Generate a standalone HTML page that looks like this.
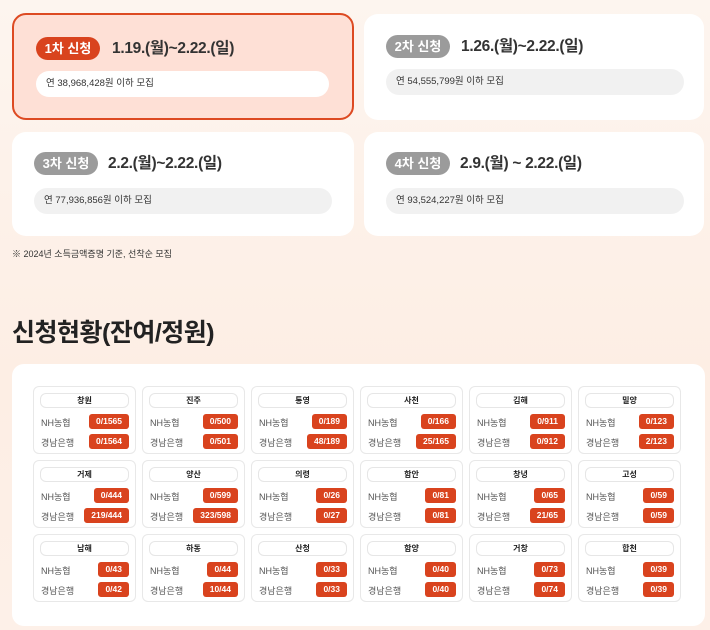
<!DOCTYPE html>
<html><head><meta charset="utf-8"><style>
*{margin:0;padding:0;box-sizing:border-box}
body{width:710px;height:630px;overflow:hidden;background:linear-gradient(180deg,#fdf5ef 0%,#fdeee4 60%,#fdf0e8 100%);font-family:"Liberation Sans","Noto Sans CJK KR",sans-serif;position:relative;color:#222}
.card{position:absolute;background:#fff;border-radius:14px}
.card.on{background:#fee0d6;border:2px solid #dd4a22}
.badge{position:absolute;height:23px;border-radius:12px;color:#fff;font-weight:bold;font-size:13px;line-height:23px;text-align:center;background:#9b9b9b}
.on .badge{background:#d9431e}
.date{position:absolute;font-size:15.5px;font-weight:bold;color:#333;line-height:23px;letter-spacing:-0.3px}
.pill{position:absolute;height:26px;border-radius:13px;background:#f1f1f1;font-size:9.5px;line-height:26px;padding-left:10px;color:#333}
.on .pill{background:#fff}
.note{position:absolute;left:12px;top:247px;font-size:9px;color:#333}
h2{position:absolute;left:12px;top:313px;font-size:25px;font-weight:bold;color:#222;letter-spacing:-0.5px}
.panel{position:absolute;left:12px;top:364px;width:693px;height:262px;background:#fff;border-radius:12px}
.cell{position:absolute;width:103px;height:68px;border:1px solid #e8e8e8;border-radius:6px;background:#fff}
.nm{position:absolute;left:6px;top:6px;width:89px;height:15px;border:1px solid #e6e6e6;border-radius:6px;font-size:8px;font-weight:bold;text-align:center;line-height:13px;color:#222}
.lb{position:absolute;left:7px;font-size:9px;color:#555}
.v{position:absolute;right:6px;height:15px;padding:0 7px;background:#d9431e;color:#fff;font-size:8.5px;font-weight:bold;line-height:15px;border-radius:3px;min-width:28px;text-align:center}
</style></head><body>
<div class="card on" style="left:12px;top:13px;width:342px;height:107px">
 <div class="badge" style="left:22px;top:22px;width:64px">1차 신청</div>
 <div class="date" style="left:98px;top:22px">1.19.(월)~2.22.(일)</div>
 <div class="pill" style="left:22px;top:56px;width:293px">연 38,968,428원 이하 모집</div>
</div>
<div class="card" style="left:364px;top:14px;width:340px;height:106px">
 <div class="badge" style="left:22px;top:21px;width:64px">2차 신청</div>
 <div class="date" style="left:97px;top:21px">1.26.(월)~2.22.(일)</div>
 <div class="pill" style="left:22px;top:55px;width:298px">연 54,555,799원 이하 모집</div>
</div>
<div class="card" style="left:12px;top:132px;width:342px;height:104px">
 <div class="badge" style="left:22px;top:20px;width:64px">3차 신청</div>
 <div class="date" style="left:96px;top:20px">2.2.(월)~2.22.(일)</div>
 <div class="pill" style="left:22px;top:56px;width:298px">연 77,936,856원 이하 모집</div>
</div>
<div class="card" style="left:364px;top:132px;width:340px;height:104px">
 <div class="badge" style="left:22px;top:20px;width:64px">4차 신청</div>
 <div class="date" style="left:96px;top:20px">2.9.(월) ~ 2.22.(일)</div>
 <div class="pill" style="left:22px;top:56px;width:298px">연 93,524,227원 이하 모집</div>
</div>
<div class="note">※ 2024년 소득금액증명 기준, 선착순 모집</div>
<h2>신청현황(잔여/정원)</h2>
<div class="panel"></div>
<div id="g"></div>
<script>
var d=[["창원","0/1565","0/1564"],["진주","0/500","0/501"],["통영","0/189","48/189"],["사천","0/166","25/165"],["김해","0/911","0/912"],["밀양","0/123","2/123"],
["거제","0/444","219/444"],["양산","0/599","323/598"],["의령","0/26","0/27"],["함안","0/81","0/81"],["창녕","0/65","21/65"],["고성","0/59","0/59"],
["남해","0/43","0/42"],["하동","0/44","10/44"],["산청","0/33","0/33"],["함양","0/40","0/40"],["거창","0/73","0/74"],["합천","0/39","0/39"]];
var h="";
d.forEach(function(c,i){var x=33+(i%6)*109,y=386+Math.floor(i/6)*74;
h+='<div class="cell" style="left:'+x+'px;top:'+y+'px"><div class="nm">'+c[0]+'</div><div class="lb" style="top:29px">NH농협</div><div class="v" style="top:27px">'+c[1]+'</div><div class="lb" style="top:49px">경남은행</div><div class="v" style="top:47px">'+c[2]+'</div></div>';});
document.getElementById("g").innerHTML=h;
</script>
</body></html>
